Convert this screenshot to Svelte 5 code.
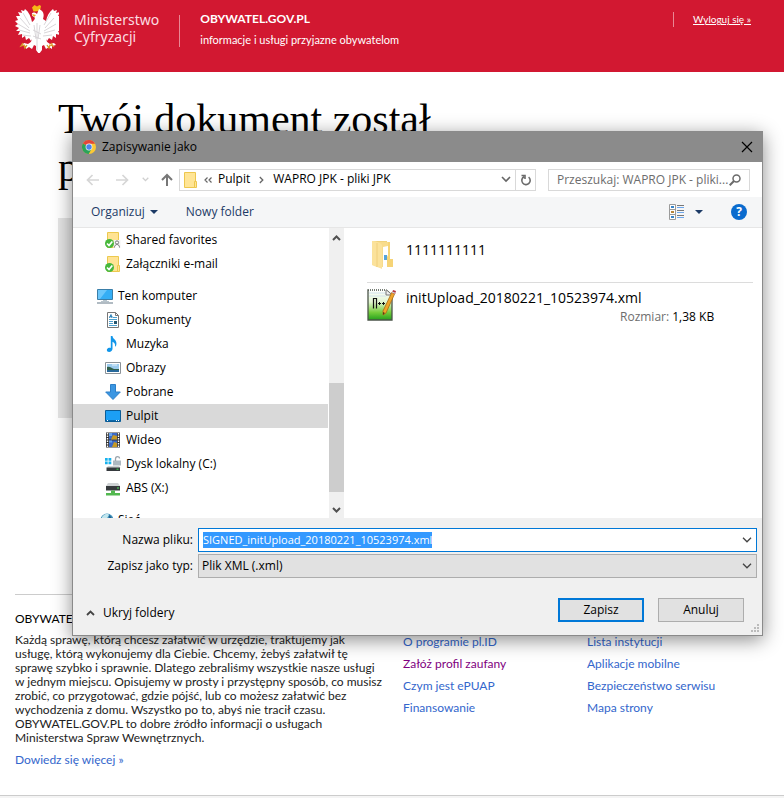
<script>
  import { onMount } from 'svelte';

  let fileName = $state('SIGNED_initUpload_20180221_10523974.xml');
  let nameBox;

  const tree = [
    { icon: 'shared', label: 'Shared favorites' },
    { icon: 'attach', label: 'Załączniki e-mail' },
    { icon: 'pc', label: 'Ten komputer', root: true },
    { icon: 'docs', label: 'Dokumenty' },
    { icon: 'music', label: 'Muzyka' },
    { icon: 'pictures', label: 'Obrazy' },
    { icon: 'down', label: 'Pobrane' },
    { icon: 'desktop', label: 'Pulpit', selected: true },
    { icon: 'video', label: 'Wideo' },
    { icon: 'disk', label: 'Dysk lokalny (C:)' },
    { icon: 'netdisk', label: 'ABS (X:)' },
    { icon: 'network', label: 'Sieć', root: true }
  ];

  const linksA = [
    { label: 'O programie pl.ID' },
    { label: 'Załóż profil zaufany', visited: true },
    { label: 'Czym jest ePUAP' },
    { label: 'Finansowanie' }
  ];
  const linksB = [
    { label: 'Lista instytucji' },
    { label: 'Aplikacje mobilne' },
    { label: 'Bezpieczeństwo serwisu' },
    { label: 'Mapa strony' }
  ];

  onMount(() => {
    nameBox.focus();
    nameBox.select();
  });
</script>

{#snippet links(items)}
  <ul class="links">
    {#each items as item}
      <li><a href="#top" class:visited={item.visited}>{item.label}</a></li>
    {/each}
  </ul>
{/snippet}

{#snippet chevron()}
  <svg width="10" height="6" viewBox="0 0 10 6" fill="none" stroke="currentColor" aria-hidden="true">
    <path d="M1 .8 5 4.8 9 .8" stroke-width="1.3" />
  </svg>
{/snippet}

{#snippet treeIcon(name)}
  <svg width="16" height="16" viewBox="0 0 16 16" aria-hidden="true">
    {#if name === 'shared' || name === 'attach'}
      <path d="M2.5.5h11v15h-11z" fill="#ffe394" stroke="#ecc94e" />
      {#if name === 'attach'}
        <path d="M12.5 9.5h2v6h-2z" fill="#ffe394" stroke="#ecc94e" />
      {:else}
        <rect x="8.500" y="8" width="7" height="8" fill="#f4f4f4" />
        <circle cx="12" cy="10.500" r="1.600" fill="#fff" stroke="#777" />
        <path d="M9.500 15.500c0-4 5-4 5 0" fill="#fff" stroke="#777" />
      {/if}
      <circle cx="4.500" cy="11.500" r="4.500" fill="#47b83c" />
      <path d="m2 11.500 2 2 3.300-4" fill="none" stroke="#fff" stroke-width="1.700" />
    {:else if name === 'pc'}
      <path d="M.5 1.500h15v10H.5z" fill="#35aef5" stroke="#3a7ea8" />
      <path d="M1 2h9L3 11H1z" fill="#6cc7fb" />
      <path d="M6 12.500h4M4 13.500h8" stroke="#b8c4cc" />
      <path d="M0 15h16" stroke="#8796a3" stroke-width="1.300" />
    {:else if name === 'docs'}
      <path d="M2.500.5h8l3 3v12h-11z" fill="#fff" stroke="#777" />
      <path d="M10.500.5v3h3" fill="none" stroke="#777" />
      <path d="m4.500 6 1.500-3.500L7 6M4.500 4.700h3" stroke="#2a80b8" fill="none" />
      <path d="M8 5.500h4M4 7.500h8M4 9.500h4M4 11.500h4M4 13.500h8" stroke="#4da0cf" />
      <path d="M9 9h3v3H9z" fill="#24566f" />
    {:else if name === 'music'}
      <path d="M7.500 0c.3 3.500 5 3.800 3.800 9-.3 1-1 1.700-1.300 1.800.5-3-.6-4.300-2.500-5v7c0 2-1.600 3.200-3.400 3.200-3 0-3-3.600 0-4.200.6-.1 1.200 0 1.700.1V0z" fill="#1196ea" />
    {:else if name === 'pictures'}
      <path d="M.5 2.500h15v11H.5z" fill="#fff" stroke="#8b9298" />
      <path d="M2 4h12v8H2z" fill="#9ccbed" />
      <path d="M2 7c3-1 4 1 7 2h5v3H2z" fill="#31604b" />
      <path d="M2 10h12v2H2z" fill="#28699b" />
      <path d="M7 5h5" stroke="#e7f4fc" />
    {:else if name === 'down'}
      <path d="M5.500.5h5V8h4.800L8 15.500.7 8h4.800z" fill="#3b96e2" stroke="#2d7fc8" />
    {:else if name === 'desktop'}
      <path d="M.5 2.500h15v11H.5z" fill="#1c9ff5" stroke="#0b5c96" />
      <path d="M1 12.200h14v1H1z" fill="#0a5a98" />
      <path d="M2 12.500h1M11 12.500h1M13 12.500h1" stroke="#fff" />
    {:else if name === 'video'}
      <path d="M1 .5h14v15H1z" fill="#333" />
      <path d="M4 1h8v6.500H4zM4 8.500h8V15H4z" fill="#3b6ac8" />
      <path d="M6 7.500 8 3l4 1v3.500zM7 15l2-5 3 1v4z" fill="#c79a24" />
      <path d="M4 1h3v3H4zM4 8.500h3v2H4z" fill="#69a4ea" />
      <path d="M2.500 1v14M13.500 1v14" stroke="#fff" stroke-width="1.400" stroke-dasharray="1.500 1" />
    {:else if name === 'disk'}
      <path d="M0 2h2.700v2.700H0zM3.500 2h2.800v2.700H3.500zM0 5.500h2.700v2.700H0zM3.500 5.500h2.800v2.700H3.500z" fill="#18b2ee" />
      <path d="M8 4.500h8v5H8z" fill="#aeb9c1" />
      <path d="M10.500 5V3c0-3 4-3 4-.5" fill="none" stroke="#9ba5ad" stroke-width="1.300" />
      <path d="M3 10h11l1.500 2h-14z" fill="#d0d3d5" />
      <path d="M1.500 11.500H15v3.500H1.500z" fill="#363a3e" />
      <path d="M11.500 13.200h2" stroke="#42df51" />
    {:else if name === 'netdisk'}
      <path d="M3 3h10l2 3H1z" fill="#cfd2d4" />
      <path d="M1 6h14v4.500H1z" fill="#36393c" />
      <path d="M12 8h2" stroke="#4be65a" />
      <path d="M6 10.500h4V13h5v2.500H1V13h5z" fill="#52b84f" />
    {:else}
      <circle cx="10" cy="8" r="6.500" fill="#3e8fb9" />
      <path d="M5 5c3-4 6-4 7-2L9 8H5z" fill="#c1e6ee" />
      <path d="M12 3c3 2 3 5 3 6l-3-2z" fill="#215f8f" />
    {/if}
  </svg>
{/snippet}

<div class="page" id="top">
  <header>
    <svg class="eagle" width="44" height="48" viewBox="0 0 44 48" aria-label="Godło Polski">
      <path d="M17 2.500 19.500 0l2.500 1.500L24.500 0 26 1l-1 5-6.500.5z" fill="#f5b916" />
      <path d="M22 9c-5-4-7 1-3 3 2 1 0 4-2 5-1-5-3-10-7-13L9 6 6 5l1 3-4-1 2 4-4 0 2 4-3 1 3 3-3 2 4 2-3 3 4 0-2 4 4-1 0 4 3-2 1 4 3-2 2 3 1-2c0 2-2 4-4 5l-4-1-2 2 4 1 0 3 3-2 3 2 2-4 2 1 0 4 3 4 3-4 0-4 2-1 2 4 3-2 3 2 0-3 4-1-2-2-4 1c-2-1-4-3-4-5l1 2 2-3 3 2 1-4 3 2 0-4 4 1-2-4 4 0-3-3 4-2-3-2 3-3-3-1 2-4-4 0 2-4-4 1 1-3-3 1-1-2c-4 3-6 7-7 12l-3-2c1-3 1-6-1-8-1-1-3-2-3-2z" fill="#fff" />
      <path d="m8 8 7 12M5 13l9 10M3 19l12 7M4 25l11 3M7 30l9 1M36 8l-7 12M39 13l-9 10M41 19l-12 7M40 25l-11 3M37 30l-9 1M19 20l2 14M25 20l-2 14M22 18v27M18 25l8 4M18 31l8 3" fill="none" stroke="#cfcbcf" stroke-width=".8" />
      <path d="m17 9 4 1-2 2z" fill="#eaa91d" />
      <path d="m8 38-2 3 3-1 1 3 2-3M36 38l2 3-3-1-1 3-2-3" fill="none" stroke="#d99a28" stroke-width="1.300" />
    </svg>
    <div class="ministry">Ministerstwo<br />Cyfryzacji</div>
    <div class="brand">
      <strong>OBYWATEL.GOV.PL</strong>
      <span>informacje i usługi przyjazne obywatelom</span>
    </div>
    <div class="logout"><a href="#top">Wyloguj się »</a></div>
  </header>

  <main>
    <h1>Twój dokument został podpisany</h1>
    <div class="panel"></div>
  </main>

  <footer>
    <section class="about">
      <h2>OBYWATEL.GOV.PL</h2>
      <p>Każdą sprawę, którą chcesz załatwić w urzędzie, traktujemy jak usługę, którą wykonujemy dla Ciebie. Chcemy, żebyś załatwił tę sprawę szybko i sprawnie. Dlatego zebraliśmy wszystkie nasze usługi w jednym miejscu. Opisujemy w prosty i przystępny sposób, co musisz zrobić, co przygotować, gdzie pójść, lub co możesz załatwić bez wychodzenia z domu. Wszystko po to, abyś nie tracił czasu. OBYWATEL.GOV.PL to dobre źródło informacji o usługach Ministerstwa Spraw Wewnętrznych.</p>
      <a href="#top">Dowiedz się więcej »</a>
    </section>
    {@render links(linksA)}
    {@render links(linksB)}
  </footer>
  <div class="base"></div>

  <div class="dialog" role="dialog" aria-labelledby="dlg-title">
    <div class="titlebar">
      <svg width="14" height="14" viewBox="0 0 14 14" aria-hidden="true">
        <circle cx="7" cy="7" r="7" fill="#fbc935" />
        <path d="M7 7 .9 3.500A7 7 0 0 1 13.100 3.800H7z" fill="#e2473a" />
        <path d="M.9 3.500A7 7 0 0 0 6.700 14L9.800 8.600 7 7z" fill="#2ba35a" />
        <circle cx="7" cy="7" r="3.400" fill="#f4f4f4" />
        <circle cx="7" cy="7" r="2.700" fill="#4a85ee" />
      </svg>
      <span id="dlg-title">Zapisywanie jako</span>
      <button class="plain close" aria-label="Zamknij">
        <svg width="12" height="12" viewBox="0 0 12 12" fill="none" stroke="#000" stroke-width="1.200"><path d="m1 1 10 10M11 1 1 11" /></svg>
      </button>
    </div>

    <div class="nav">
      <div class="arrows">
        <button class="plain" aria-label="Wstecz"><svg width="13" height="12" viewBox="0 0 13 12" fill="none" stroke="#d6d6d6" stroke-width="1.700"><path d="M13 6H1.500M6.500 1l-5 5 5 5" /></svg></button>
        <button class="plain" aria-label="Dalej"><svg width="13" height="12" viewBox="0 0 13 12" fill="none" stroke="#d6d6d6" stroke-width="1.700"><path d="M0 6h11.500M6.500 1l5 5-5 5" /></svg></button>
        <button class="plain recent" aria-label="Ostatnie"><svg width="7" height="5" viewBox="0 0 7 5" fill="none" stroke="#cfcfcf" stroke-width="1.300"><path d="m.7.8 2.800 2.800L6.300.8" /></svg></button>
        <button class="plain" aria-label="W górę"><svg width="12" height="13" viewBox="0 0 12 13" fill="none" stroke="#777" stroke-width="2"><path d="M6 13V2M1 7l5-5 5 5" /></svg></button>
      </div>
      <div class="address">
        <svg width="14" height="16" viewBox="0 0 14 16" aria-hidden="true"><path d="M.5.500h11v15H.5z" fill="#ffe596" stroke="#edc74e" /><path d="M10.500 9.500h2v6h-2z" fill="#ffe596" stroke="#edc74e" /></svg>
        <svg width="8" height="6" viewBox="0 0 8 6" fill="none" stroke="#666" stroke-width="1.200" aria-hidden="true"><path d="M3.500.5 1 3l2.500 2.500M7.500.5 5 3l2.500 2.500" /></svg>
        <span>Pulpit</span>
        <svg width="5" height="8" viewBox="0 0 5 8" fill="none" stroke="#666" stroke-width="1.300" aria-hidden="true"><path d="m.8 1 3 3-3 3" /></svg>
        <span class="current">WAPRO JPK - pliki JPK</span>
        <svg class="drop" width="10" height="7" viewBox="0 0 10 7" fill="none" stroke="#666" stroke-width="1.600" aria-hidden="true"><path d="m1 1 4 4 4-4" /></svg>
        <button class="plain refresh" aria-label="Odśwież">
          <svg width="12" height="12" viewBox="0 0 12 12" fill="none" stroke="#6b6b6b" stroke-width="1.600"><path d="M4 2.700a4.200 4.200 0 1 0 4.600.4M1.500 1.500H5V5" /></svg>
        </button>
      </div>
      <label class="search">
        <input type="text" aria-label="Przeszukaj" placeholder="Przeszukaj: WAPRO JPK - pliki..." />
        <svg width="12" height="12" viewBox="0 0 12 12" fill="none" stroke="#6b6b6b" aria-hidden="true"><circle cx="7.500" cy="4.500" r="3.500" stroke-width="1.500" /><path d="M5 7 .7 11.300" stroke-width="2" /></svg>
      </label>
    </div>

    <div class="toolbar">
      <button class="plain">Organizuj <svg width="8" height="4" viewBox="0 0 8 4" aria-hidden="true"><path d="M0 0h8L4 4z" fill="#1c3a66" /></svg></button>
      <button class="plain">Nowy folder</button>
      <button class="plain view" aria-label="Widok">
        <svg width="16" height="16" viewBox="0 0 16 16" fill="none">
          <path d="M.5.500h6v15h-6zM.5 5.500h6M.5 10.500h6" fill="#fff" stroke="#9b9b9b" />
          <path d="M2 3h3" stroke="#3784c8" stroke-width="2" /><path d="M2 8h3" stroke="#b98639" stroke-width="2" /><path d="M2 13h3" stroke="#3784c8" stroke-width="2" />
          <path d="M8 1.500h7M8 6.500h7M8 11.500h7" stroke="#777" />
          <path d="M8 3.500h7M8 8.500h7M8 13.500h7" stroke="#6ea8ee" />
        </svg>
        <svg width="8" height="4" viewBox="0 0 8 4"><path d="M0 0h8L4 4z" fill="#1c3a66" /></svg>
      </button>
      <button class="plain help" aria-label="Pomoc">?</button>
    </div>

    <div class="body">
      <ul class="tree">
        {#each tree as item}
          <li class:root={item.root} class:selected={item.selected}>{@render treeIcon(item.icon)}<span>{item.label}</span></li>
        {/each}
      </ul>
      <div class="scrollbar">
        <svg width="9" height="6" viewBox="0 0 9 6" fill="none" stroke="#505050" stroke-width="2" aria-hidden="true"><path d="m1 5 3.500-3.500L8 5" /></svg>
        <div class="track"><div class="thumb"></div></div>
        <svg width="9" height="6" viewBox="0 0 9 6" fill="none" stroke="#505050" stroke-width="2" aria-hidden="true"><path d="m1 1 3.500 3.500L8 1" /></svg>
      </div>
      <div class="files">
        <div class="file folder">
          <svg width="30" height="34" viewBox="0 0 30 34" aria-hidden="true">
            <path d="M5 1h15v23H5z" fill="#f0d27c" />
            <path d="M9 2h13v25H9z" fill="#f8dc8c" />
            <path d="m16 7 5-1v21h-5z" fill="#fff" /><path d="M17 15h3v5h-3z" fill="#57a4da" />
            <path d="M5 1c4 0 9 2 10 4v24c-2-1-8-3-10-4z" fill="#fbe29b" />
            <path d="M21 2h2v17h3v8h-6V17l1-2z" fill="#f6d477" />
            <path d="M10 3v24" stroke="#f0cf7c" />
          </svg>
          <span>1111111111</span>
        </div>
        <div class="file">
          <svg width="30" height="34" viewBox="0 0 30 34" aria-hidden="true">
            <defs><linearGradient id="npp" x1="0" y1="0" x2="0" y2="1"><stop offset="0" stop-color="#fff" /><stop offset=".4" stop-color="#e2f5d0" /><stop offset=".75" stop-color="#74cc3b" /><stop offset="1" stop-color="#23a01c" /></linearGradient></defs>
            <path d="M1 2h18l6 5v25H1z" fill="url(#npp)" stroke="#4b5449" stroke-width="1.300" />
            <path d="M2 5h17M2 8h17" stroke="#d2e2ec" />
            <path d="M2 2h17" stroke="#fff" stroke-width="2" stroke-dasharray="1 1" />
            <path d="M19 2v5h6" fill="#eee" stroke="#777" />
            <path d="M6.500 20.500V10.500h3v10" fill="none" stroke="#111" stroke-width="1.200" />
            <path d="M11 15.500h3M12.500 14v3M15 15.500h3M16.500 14v3" fill="none" stroke="#111" />
            <path d="m25 4 3 1-9 20-3 2 0-4z" fill="#f0a52a" stroke="#a86c14" stroke-width=".8" />
            <path d="m16 24 2 1-2 2z" fill="#5b3a12" />
            <path d="m26 2 3 1-1 3-3-1z" fill="#b33240" />
            <path d="m25 4 3.200 1.300" stroke="#ccd3da" stroke-width="1.200" />
          </svg>
          <span>initUpload_20180221_10523974.xml</span>
        </div>
        <div class="size"><span>Rozmiar:</span> 1,38 KB</div>
      </div>
    </div>

    <div class="form">
      <div class="row">
        <label for="fname">Nazwa pliku:</label>
        <div class="field active"><input id="fname" type="text" bind:this={nameBox} bind:value={fileName} />{@render chevron()}</div>
      </div>
      <div class="row">
        <label for="ftype">Zapisz jako typ:</label>
        <div class="field"><select id="ftype"><option>Plik XML (.xml)</option></select>{@render chevron()}</div>
      </div>
      <div class="actions">
        <button class="plain hide">
          <svg width="9" height="6" viewBox="0 0 9 6" fill="none" stroke="#444" stroke-width="1.800" aria-hidden="true"><path d="m1 5 3.500-3.500L8 5" /></svg>
          Ukryj foldery
        </button>
        <button class="push primary">Zapisz</button>
        <button class="push">Anuluj</button>
      </div>
      <svg class="grip" width="8" height="8" viewBox="0 0 8 8" fill="#bbb" aria-hidden="true"><path d="M6 0h2v2H6zM3 3h2v2H3zM6 3h2v2H6zM0 6h2v2H0zM3 6h2v2H3zM6 6h2v2H6z" /></svg>
    </div>
  </div>
</div>

<style>
  :global(body) { margin: 0; background: #fff; }
  * { box-sizing: border-box; }
  ul { list-style: none; margin: 0; padding: 0; }
  svg { flex: none; display: block; }
  .page { position: relative; font: 12px/14px Lato, sans-serif; color: #222; overflow: hidden; }
  a { color: #3366cc; text-decoration: none; }

  header { display: flex; align-items: flex-start; height: 72px; padding: 5px 33px 0 15px; background: #d21831; color: #fff; }
  .ministry { padding: 6px 20px 0 15px; font: 14px/17px "Noto Sans", sans-serif; color: #fbdde1; }
  .brand { display: flex; flex-direction: column; gap: 6px; margin-top: 10px; padding-left: 20px; border-left: 1px solid #e98794; }
  .brand strong { margin-top: -4px; font-size: 12px; line-height: 16px; }
  .brand span { font-size: 11px; line-height: 14px; }
  .logout { margin: 7px 0 0 auto; padding-left: 19px; border-left: 1px solid #e98794; font-size: 10px; line-height: 15px; }
  .logout a { color: #fff; text-decoration: underline; }

  main { padding: 23px 58px 0; }
  h1 { width: 400px; margin: 0 0 27px; font: 400 42px/48px "Liberation Serif", serif; color: #000; }
  .panel { height: 200px; background: #e5e5e5; }
  footer { display: grid; grid-template-columns: minmax(0, 373px) 169px 169px; column-gap: 15px; margin: 176px 15px 0; background: linear-gradient(#ccc, #ccc) 0 0 / 741px 1px no-repeat; }
  h2 { margin: 17px 0 6px; font-size: 12px; line-height: 16px; font-weight: 400; color: #000; }
  p { margin: 0 0 8px; padding-right: 5px; }
  .links { padding-top: 37px; }
  .links li { line-height: 22px; }
  .visited { color: #800080; }
  .base { height: 3px; margin-top: 28px; border-top: 1px solid #ccc; background: #f4f4f4; }

  .dialog { position: absolute; left: 72px; top: 131px; right: 21px; display: flex; flex-direction: column; border: 1px solid #8a8a8a; background: #fff; box-shadow: 0 4px 18px rgba(0, 0, 0, .45); font: 12px/16px "Open Sans", sans-serif; color: #000; }
  button, input, select { font: inherit; color: inherit; }
  .plain { display: flex; align-items: center; padding: 0; border: 0; background: none; }
  .titlebar { display: flex; align-items: center; gap: 6px; height: 30px; padding: 0 9px; background: #8b8b8b; }
  .close { margin-left: auto; }
  .nav { display: flex; align-items: center; height: 35px; padding: 0 12px 0 13px; }
  .arrows { display: flex; align-items: center; gap: 17px; width: 93px; }
  .recent { margin: 0 -5px 0 -4px; }
  .address { display: flex; align-items: center; flex: 1; height: 22px; margin-right: 12px; padding-left: 4px; border: 1px solid #d9d9d9; }
  .address > svg { margin-right: 6px; }
  .address > span { margin-right: 9px; line-height: 20px; padding-bottom: 2px; }
  .address > .current { flex: 1; margin-left: 3px; }
  .address > .drop { margin-right: 4px; }
  .refresh { justify-content: center; width: 20px; height: 20px; border-left: 1px solid #d9d9d9; }
  .search { display: flex; align-items: center; width: 202px; height: 22px; padding: 0 8px; border: 1px solid #d9d9d9; }
  .search input { flex: 1; min-width: 0; padding: 0; border: 0; outline: 0; background: none; }
  .search input::placeholder { color: #6d6d6d; opacity: 1; }
  .toolbar { display: flex; align-items: center; gap: 28px; height: 31px; padding: 0 15px 0 18px; background: #f5f6f7; border-bottom: 1px solid #e6e6e6; color: #1c3a66; }
  .toolbar .plain { gap: 5px; }
  .toolbar .view { gap: 10px; margin-left: auto; }
  .toolbar .help { justify-content: center; width: 16px; height: 16px; border-radius: 50%; background: #0a6bce; color: #fff; font-weight: 700; }

  .body { display: flex; height: 290px; }
  .tree { width: 255px; overflow: hidden; }
  .tree li { display: flex; align-items: center; gap: 5px; height: 24px; padding-left: 32px; white-space: nowrap; }
  .tree .root { margin-top: 8px; padding-left: 24px; }
  .tree .selected { background: #d9d9d9; }
  .scrollbar { display: flex; flex-direction: column; align-items: center; width: 15px; padding: 7px 0 5px; margin-left: 1px; background: #f0f0f0; }
  .track { display: flex; align-items: flex-end; flex: 1; align-self: stretch; padding-bottom: 15px; }
  .thumb { width: 100%; height: 109px; background: #cdcdcd; }
  .files { flex: 1; padding: 0 9px 0 23px; }
  .file { display: flex; align-items: flex-start; gap: 9px; padding-top: 5px; font-size: 14px; line-height: 20px; }
  .folder { height: 55px; padding-top: 12px; border-bottom: 1px solid #dcdcdc; }
  .size { margin: -13px 0 0 253px; }
  .size span { color: #6d6d6d; }

  .form { position: relative; padding: 10px 5px 13px; background: #f0f0f0; }
  .row { display: flex; align-items: center; margin-bottom: 2px; }
  .row label { width: 120px; padding-right: 5px; text-align: right; }
  .field { display: flex; align-items: center; flex: 1; height: 24px; padding-right: 4px; border: 1px solid #adadad; background: #e1e1e1; color: #444; }
  .active { border-color: #0078d7; background: #fff; }
  .field input, .field select { flex: 1; min-width: 0; height: 16px; padding: 0 4px; border: 0; outline: 0; background: none; appearance: none; color: #000; line-height: 16px; }
  .field select { padding: 0 3px; }
  .field input { font-size: 11px; }
  #fname::selection { background: #3399ff; color: #fff; }
  .actions { display: flex; align-items: center; gap: 14px; margin-top: 20px; padding: 0 13px 0 8px; }
  .hide { gap: 8px; margin-right: auto; padding-top: 6px; }
  .push { width: 86px; height: 24px; padding: 0; border: 1px solid #adadad; background: #e1e1e1; }
  .primary { border: 2px solid #0078d7; }
  .grip { position: absolute; right: 3px; bottom: 3px; }
</style>
